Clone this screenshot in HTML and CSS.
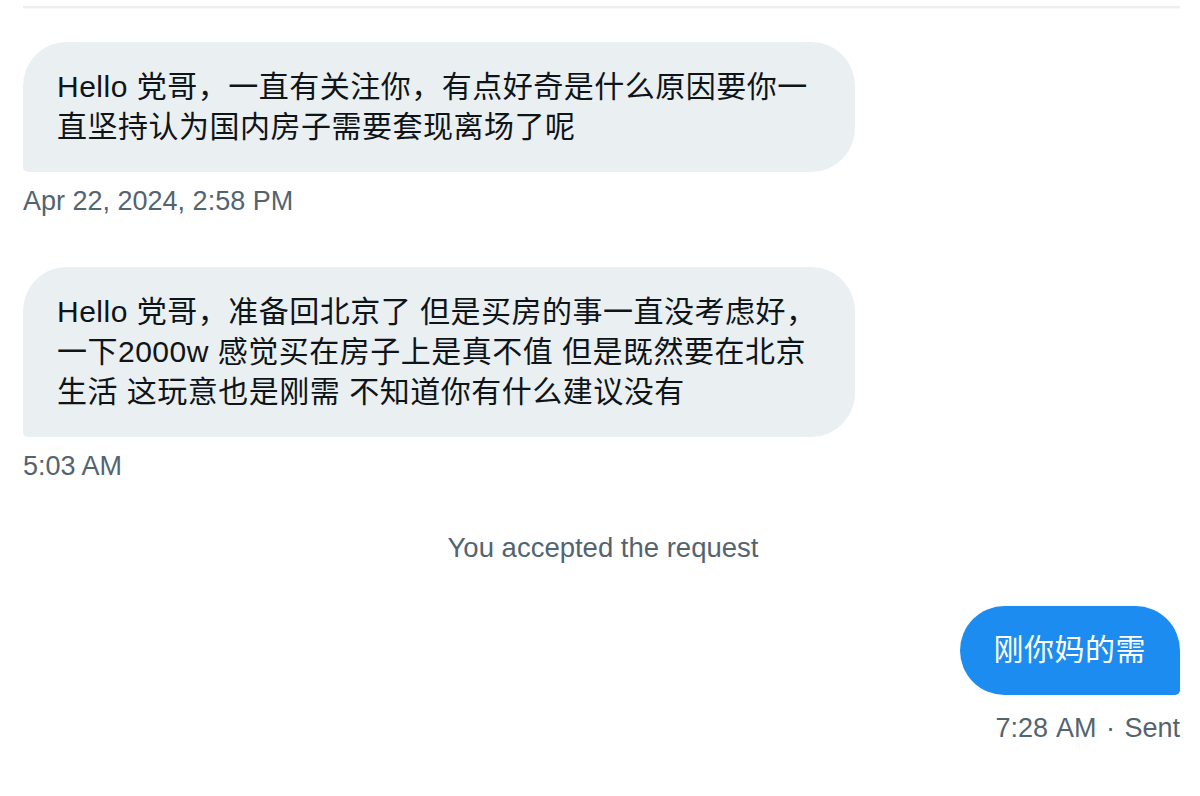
FILE: index.html
```html
<!DOCTYPE html>
<html lang="zh-CN">
<head>
<meta charset="utf-8">
<title>Messages</title>
<link rel="stylesheet" href="styles.css">
</head>
<body>
<div class="top-rule"></div>
<main class="thread">
  <div class="msg msg-in">
    <div class="bubble bubble-in">Hello 党哥，一直有关注你，有点好奇是什么原因要你一<br>直坚持认为国内房子需要套现离场了呢</div>
    <div class="meta">Apr 22, 2024, 2:58 PM</div>
  </div>
  <div class="msg msg-in">
    <div class="bubble bubble-in">Hello 党哥，准备回北京了 但是买房的事一直没考虑好，<br>一下2000w 感觉买在房子上是真不值 但是既然要在北京<br>生活 这玩意也是刚需 不知道你有什么建议没有</div>
    <div class="meta">5:03 AM</div>
  </div>
  <div class="notice">You accepted the request</div>
  <div class="msg msg-out">
    <div class="bubble bubble-out">刚你妈的需</div>
    <div class="meta meta-out">7:28 AM · Sent</div>
  </div>
</main>
</body>
</html>
```
FILE: styles.css
```css
html, body {
  margin: 0;
  padding: 0;
  background: #ffffff;
}

body {
  font-family: "Liberation Sans", "Noto Sans CJK SC", sans-serif;
  color: #0f1419;
}

.top-rule {
  margin: 6px 20px 0 23px;
  height: 2px;
  background: #eceeef;
  box-shadow: 0 1px 1px rgba(0, 0, 0, 0.03);
}

.thread {
  display: flex;
  flex-direction: column;
  padding: 34px 20px 0 23px;
}

.msg {
  display: flex;
  flex-direction: column;
}

.msg-in {
  align-items: flex-start;
  margin-bottom: 50px;
}

.msg-out {
  align-items: flex-end;
}

.bubble {
  font-size: 30px;
  line-height: 40px;
  letter-spacing: 0.5px;
  padding: 25px 34px;
  box-sizing: border-box;
  white-space: nowrap;
}

.bubble-in {
  width: 832px;
  background: #eaeff1;
  color: #0f1419;
  border-radius: 44px 44px 44px 5px;
}

.bubble-out {
  background: #1d8cf0;
  color: #ffffff;
  padding: 24px 34px 25px;
  border-radius: 45px 45px 5px 45px;
}

.meta {
  font-size: 27px;
  line-height: 32px;
  color: #536471;
  margin-top: 13px;
}

.meta-out {
  margin-top: 17px;
  word-spacing: 2px;
}

.notice {
  font-size: 27.5px;
  line-height: 32px;
  color: #536471;
  text-align: center;
  margin: 0 0 42px;
  padding-left: 3px;
}
```
